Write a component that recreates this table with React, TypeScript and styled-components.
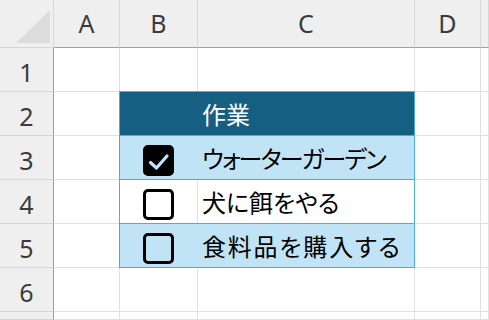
import React from "react";
import styled, { createGlobalStyle } from "styled-components";

const Global = createGlobalStyle`
  html, body { margin: 0; padding: 0; background: #ffffff; }
  #root { width: 489px; height: 320px; overflow: hidden; }
`;

const Sheet = styled.div`
  display: grid;
  grid-template-columns: 54px 66px 78px 217px 66px 1fr;
  grid-template-rows: 48px repeat(6, 44px) 1fr;
  width: 489px;
  height: 320px;
  background: #ffffff;
  font-family: "Noto Sans", "Open Sans", sans-serif;
`;

const Corner = styled.div`
  box-sizing: border-box;
  background: #efefef;
  border-right: 1px solid #d6d6d6;
  border-bottom: 1px solid #d6d6d6;
  display: flex;
  align-items: flex-end;
  justify-content: flex-end;
  padding: 0 3px 4px 0;
`;

const ColHead = styled.div`
  box-sizing: border-box;
  background: #efefef;
  border-right: 1px solid #d6d6d6;
  border-bottom: 1px solid #a0a0a0;
  display: flex;
  align-items: center;
  justify-content: center;
  color: #3b3b3b;
  font-size: 25px;
  padding-bottom: 1px;
`;

const RowHead = styled.div`
  box-sizing: border-box;
  background: #efefef;
  border-right: 1px solid #a0a0a0;
  border-bottom: 1px solid #d6d6d6;
  display: flex;
  align-items: center;
  justify-content: center;
  color: #3b3b3b;
  font-size: 25px;
  padding-top: 4px;
`;

const Cell = styled.div`
  box-sizing: border-box;
  background: #ffffff;
  border-right: 1px solid #e0e0e0;
  border-bottom: 1px solid #e0e0e0;
`;

const Table = styled.div`
  grid-column: 3 / span 2;
  grid-row: 3 / span 4;
  margin: -1px 0 0 -1px;
  border: 1px solid #46aee0;
  display: flex;
  flex-direction: column;
  position: relative;
  z-index: 1;
`;

const TRow = styled.div<{ $fill: string }>`
  display: flex;
  height: 43px;
  background: ${(p) => p.$fill};
  border-bottom: 1px solid #46aee0;
  &:last-child { border-bottom: none; }
`;

const CheckCell = styled.div<{ $line: string }>`
  box-sizing: border-box;
  width: 78px;
  border-right: 1px solid ${(p) => p.$line};
  display: flex;
  align-items: center;
  justify-content: center;
  padding-top: 5px;
`;

const TextCell = styled.div<{ $color: string; $spacing: number }>`
  flex: 1;
  display: flex;
  align-items: center;
  padding-left: 4px;
  font-family: "Noto Sans CJK JP", "Noto Sans", sans-serif;
  font-size: 24px;
  color: ${(p) => p.$color};
  font-feature-settings: "palt";
  letter-spacing: ${(p) => p.$spacing}px;
  white-space: nowrap;
`;

const Box = styled.div<{ $checked: boolean }>`
  box-sizing: border-box;
  width: 31px;
  height: 31px;
  border: 3px solid #000;
  border-radius: 5px;
  background: ${(p) => (p.$checked ? "#000" : "transparent")};
  display: flex;
  align-items: center;
  justify-content: center;
`;

const Check = ({ color }: { color: string }) => (
  <svg width="25" height="25" viewBox="0 0 25 25">
    <path d="M4.5 14.5 L10.5 20 L21 8" fill="none" stroke={color} strokeWidth="3.2" strokeLinecap="round" strokeLinejoin="round" />
  </svg>
);

const Triangle = () => (
  <svg width="34" height="33" viewBox="0 0 34 33">
    <polygon points="34,0 34,33 0,33" fill="#dcdcdc" />
  </svg>
);

const cols = ["A", "B", "C", "D", ""];
const LIGHT = "#c0e4f5";
const WHITE = "#ffffff";

const items = [
  { text: "ウォーターガーデン", checked: true, fill: LIGHT, spacing: -1.8 },
  { text: "犬に餌をやる", checked: false, fill: WHITE, spacing: 0 },
  { text: "食料品を購入する", checked: false, fill: LIGHT, spacing: 1.8 },
];

export default function App() {
  const rows = [1, 2, 3, 4, 5, 6, 7];
  return (
    <>
      <Global />
      <Sheet>
        <Corner>
          <Triangle />
        </Corner>
        {cols.map((c, i) => (
          <ColHead key={i}>{c}</ColHead>
        ))}
        <Table>
          <TRow $fill="#156082">
            <CheckCell $line="#156082" />
            <TextCell $color="#ffffff" $spacing={0}>作業</TextCell>
          </TRow>
          {items.map((it) => (
            <TRow key={it.text} $fill={it.fill}>
              <CheckCell $line={it.fill === WHITE ? "#e0e0e0" : it.fill}>
                <Box $checked={it.checked}>{it.checked && <Check color={LIGHT} />}</Box>
              </CheckCell>
              <TextCell $color="#000000" $spacing={it.spacing}>{it.text}</TextCell>
            </TRow>
          ))}
        </Table>
        {rows.map((r) => (
          <React.Fragment key={r}>
            <RowHead>{r <= 6 ? r : ""}</RowHead>
            <Cell />
            {!(r >= 2 && r <= 5) && (
              <>
                <Cell />
                <Cell />
              </>
            )}
            <Cell />
            <Cell />
          </React.Fragment>
        ))}
      </Sheet>
    </>
  );
}
